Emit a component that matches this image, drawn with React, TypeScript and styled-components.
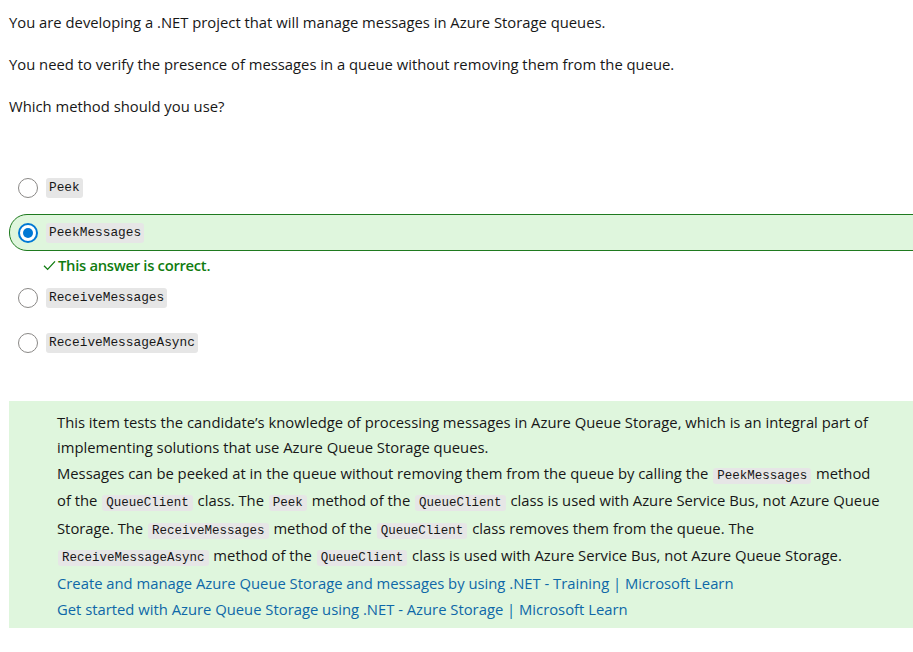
import styled, { createGlobalStyle } from "styled-components";

const GlobalStyle = createGlobalStyle`
  html, body {
    margin: 0;
    padding: 0;
    background: #ffffff;
    overflow-x: hidden;
  }
  body {
    font-family: "Segoe UI", "Open Sans", "Noto Sans", sans-serif;
    color: #171717;
  }
`;

const Page = styled.div`
  padding: 12px 0 0 9px;
  font-size: 14.8px;
`;

const Question = styled.div`
  display: flex;
  flex-direction: column;
  gap: 22px;
`;

const Para = styled.p`
  margin: 0;
  line-height: 20px;
`;

const Options = styled.div`
  display: flex;
  flex-direction: column;
  margin-top: 53px;
  margin-right: -30px;
`;

const OptionRow = styled.label<{ $selected?: boolean }>`
  display: flex;
  align-items: center;
  gap: 8px;
  height: 37px;
  box-sizing: border-box;
  padding-left: 8px;
  margin-bottom: 8px;
  border: 1px solid ${(p) => (p.$selected ? "#1f7a1f" : "transparent")};
  border-radius: 18px 0 0 18px;
  background: ${(p) => (p.$selected ? "#dff6dd" : "transparent")};
`;

const Radio = styled.span<{ $checked?: boolean }>`
  width: 20px;
  height: 20px;
  box-sizing: border-box;
  border-radius: 50%;
  background: #ffffff;
  border: ${(p) => (p.$checked ? "2px solid #0078d4" : "1px solid #8a8886")};
  display: flex;
  align-items: center;
  justify-content: center;

  &::after {
    content: "";
    display: ${(p) => (p.$checked ? "block" : "none")};
    width: 10px;
    height: 10px;
    border-radius: 50%;
    background: #0078d4;
  }
`;

const Code = styled.code`
  font-family: "Liberation Mono", "DejaVu Sans Mono", monospace;
  font-size: 12.8px;
  background: #e6e6e6;
  border-radius: 3px;
  padding: 2px 3px;
  line-height: 16px;
  color: #171717;
`;

const Feedback = styled.div`
  display: flex;
  align-items: center;
  gap: 2px;
  margin: -4px 0 4px 34px;
  height: 20px;
  color: #107c10;
  font-weight: 600;
  font-size: 14.8px;
  letter-spacing: -0.3px;
`;

const Explanation = styled.div`
  margin-top: 32px;
  background: #dff6dd;
  padding: 8.5px 0 6.5px 48px;
  white-space: nowrap;

  ${Code} {
    padding: 1px 4px;
    margin: 0 1px;
    font-size: 12.5px;
  }
`;

const Line = styled.div<{ $lh: number }>`
  line-height: ${(p) => p.$lh}px;
`;

const Link = styled.a`
  color: #0e68a8;
  text-decoration: none;
  display: block;
  line-height: 26px;
`;

function CheckMark() {
  return (
    <svg width="13" height="11" viewBox="0 0 13 11" fill="none">
      <path d="M1 5.8 L4.6 9.4 L12 1.4" stroke="#107c10" strokeWidth="1.3" />
    </svg>
  );
}

const options = [
  { text: "Peek", selected: false },
  { text: "PeekMessages", selected: true },
  { text: "ReceiveMessages", selected: false },
  { text: "ReceiveMessageAsync", selected: false },
];

export default function App() {
  return (
    <>
      <GlobalStyle />
      <Page>
        <Question>
          <Para>You are developing a .NET project that will manage messages in Azure Storage queues.</Para>
          <Para>You need to verify the presence of messages in a queue without removing them from the queue.</Para>
          <Para>Which method should you use?</Para>
        </Question>

        <Options>
          {options.map((o) => (
            <div key={o.text}>
              <OptionRow $selected={o.selected}>
                <Radio $checked={o.selected} />
                <Code>{o.text}</Code>
              </OptionRow>
              {o.selected && (
                <Feedback>
                  <CheckMark />
                  This answer is correct.
                </Feedback>
              )}
            </div>
          ))}
        </Options>

        <Explanation>
          <Line $lh={25}>
            This item tests the candidate’s knowledge of processing messages in Azure Queue Storage, which is an integral part of
            <br />
            implementing solutions that use Azure Queue Storage queues.
          </Line>
          <Line $lh={27.5}>
            Messages can be peeked at in the queue without removing them from the queue by calling the <Code>PeekMessages</Code> method
            <br />
            of the <Code>QueueClient</Code> class. The <Code>Peek</Code> method of the <Code>QueueClient</Code> class is used with Azure
            Service Bus, not Azure Queue
            <br />
            Storage. The <Code>ReceiveMessages</Code> method of the <Code>QueueClient</Code> class removes them from the queue. The
            <br />
            <Code>ReceiveMessageAsync</Code> method of the <Code>QueueClient</Code> class is used with Azure Service Bus, not Azure
            Queue Storage.
          </Line>
          <Link href="#">Create and manage Azure Queue Storage and messages by using .NET - Training | Microsoft Learn</Link>
          <Link href="#">Get started with Azure Queue Storage using .NET - Azure Storage | Microsoft Learn</Link>
        </Explanation>
      </Page>
    </>
  );
}
